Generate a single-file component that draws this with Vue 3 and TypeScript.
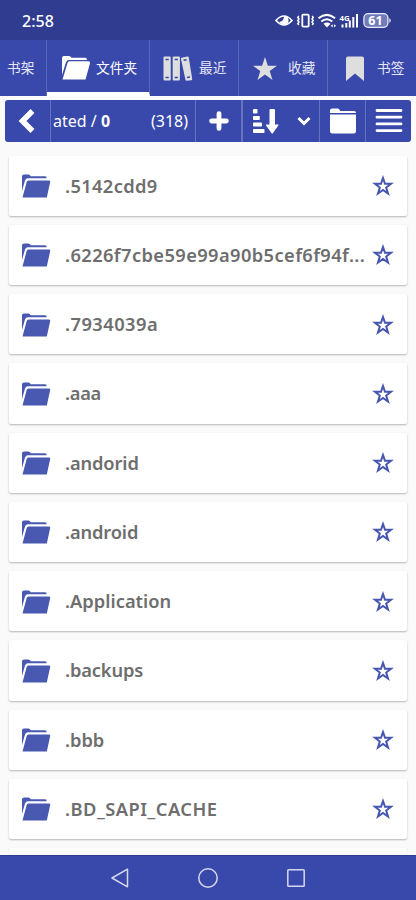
<script setup lang="ts">
interface Folder {
  name: string
  spacing: number
}

const folders: Folder[] = [
  { name: '.5142cdd9', spacing: 0.36 },
  { name: '.6226f7cbe59e99a90b5cef6f94f...', spacing: 0.4 },
  { name: '.7934039a', spacing: 0.46 },
  { name: '.aaa', spacing: -0.3 },
  { name: '.andorid', spacing: -0.12 },
  { name: '.android', spacing: -0.14 },
  { name: '.Application', spacing: 0.02 },
  { name: '.backups', spacing: -0.14 },
  { name: '.bbb', spacing: -0.05 },
  { name: '.BD_SAPI_CACHE', spacing: 0.5 },
]
</script>

<template>
  <div class="screen">
    <header class="status">
      <span class="clock">2:58</span>
      <svg class="indicators" width="120" height="20" viewBox="0 0 120 20" fill="none" stroke="#fff">
        <path d="M1 10.500Q9 1.500 17 10.500Q9 19.500 1 10.500Z" stroke-width="1.700" />
        <path d="M9 6a4.500 4.500 0 1 1-4.400 5.200C6 12 8.800 11 9 6Z" fill="#fff" stroke="none" />
        <rect x="27.300" y="4.600" width="6.400" height="12" rx="1" stroke-width="1.800" />
        <path d="M23.800 6l-1 1.500 1.200 1.500-1.200 1.500 1.200 1.500-1.200 1.500 1 1.500M37.200 6l1 1.500-1.200 1.500 1.200 1.500-1.200 1.500 1.200 1.500-1 1.500" stroke-width="1.500" />
        <path d="M43.500 8.200q8.300-6.600 16.600 0M46.300 11.500q5.500-4.600 11 0" stroke-width="2" />
        <path d="M48.500 13.800q3.500-2.600 7 0L52 17.400ZM55.700 15.800l2-1.600v3.200ZM61 15.800l-2-1.600v3.200Z" fill="#fff" stroke="none" />
        <path d="M67.500 14.500V17.500M71.300 13V17.500M74.800 10.500V17.500M78.300 7V17.500M82 4V17.500" stroke-width="2" />
        <text x="64.500" y="10.500" font-size="7.800" fill="#fff" stroke="none" font-weight="700">4G</text>
        <rect x="88.900" y="3.700" width="24" height="13.600" rx="4.200" fill="#737cba" stroke="#e8eaf5" stroke-width="1.300" />
        <path d="M114.400 8q2.600 2.500 0 5z" fill="#fff" stroke="none" />
        <text x="100.500" y="14.800" text-anchor="middle" font-size="12.500" fill="#fff" stroke="none" font-weight="700">61</text>
      </svg>
    </header>

    <nav class="tabs">
      <div class="tab shelf"><span>书架</span></div>
      <div class="tab folder active">
        <svg width="30" height="26" viewBox="0 0 30 26" fill="#fff">
          <path d="M1 2q0-2 2-2h5q1.500 0 2.500 1.800h13.700q1.800 0 1.800 2.200H8Q6 4 5 6.200L1 19Z" />
          <path d="M8.500 5.200H27.500q2 0 1.500 2L24.500 23.500H1.500L6.500 7q.5-1.800 2-1.800Z" />
        </svg>
        <span>文件夹</span>
      </div>
      <div class="tab recent">
        <svg width="30" height="26" viewBox="0 0 30 26">
          <g fill="#dedede">
            <rect x=".5" y=".5" width="7.200" height="24" rx="1" /><rect x="9.700" y=".5" width="7.200" height="24" rx="1" />
            <path d="M18.500 1.800 24.500 .500q1-.2 1.200.8L29.200 23q.1 1-.8 1.200l-4.700.6q-1 .1-1.200-.8L18 3q-.2-1 .5-1.200Z" />
          </g>
          <path d="M2.500 3.500h3.200M11.700 3.500h3.200M20.600 4.300l3-.6M2.500 21.500h3.200M11.700 21.500h3.200M24 21.500l3-.5" stroke="#3949ab" stroke-width="1.600" />
        </svg>
        <span>最近</span>
      </div>
      <div class="tab favorite">
        <svg width="26" height="26" viewBox="0 0 26 26" fill="#dedede"><path d="M13 1l2.900 8.700H25l-7.300 5.400L20.500 24 13 18.600 5.500 24l2.800-8.900L1 9.700h9.100Z" /></svg>
        <span>收藏</span>
      </div>
      <div class="tab bookmark">
        <svg width="20" height="26" viewBox="0 0 20 26" fill="#dedede"><path d="M1 2.500Q1 .500 3 .500h14q2 0 2 2V25l-9-7.500L1 25Z" /></svg>
        <span>书签</span>
      </div>
    </nav>

    <div class="toolbar">
      <div class="tool back">
        <svg width="18" height="26" viewBox="0 0 18 26" fill="none" stroke="#fff" stroke-width="5.500"><path d="M14.500 3 4.500 13 14.500 23" /></svg>
      </div>
      <div class="tool path">
        <span>ated / <b>0</b></span><span class="count">(318)</span>
      </div>
      <div class="tool add">
        <svg width="20" height="20" viewBox="0 0 20 20" stroke="#fff" stroke-width="4.800" stroke-linecap="round"><path d="M2.600 10h14.800M10 2.600v14.800" /></svg>
      </div>
      <div class="tool sort">
        <svg width="27" height="26" viewBox="0 0 27 26" fill="#fff">
          <rect x="1" y="1" width="4.500" height="4.500" rx=".8" /><rect x="1" y="8" width="6.800" height="4" rx=".8" /><rect x="1" y="14.500" width="9" height="4" rx=".8" /><rect x="1" y="21" width="11.500" height="4" rx=".8" />
          <path d="M17.500 2q0-1 1-1h3.500q1 0 1 1v14.500h3q1 0 .3 1l-5.500 7.800q-.6.700-1.200 0L14.100 17.500q-.6-1 .4-1h3Z" />
        </svg>
        <svg class="chevron" width="14" height="10" viewBox="0 0 14 10" fill="none" stroke="#fff" stroke-width="3"><path d="M1.500 2 7 7.500 12.500 2" /></svg>
      </div>
      <div class="tool directory">
        <svg width="28" height="26" viewBox="0 0 28 26" fill="#fff">
          <path d="M1 5V2.500Q1 .500 3 .500h6q1.200 0 2.200 2.500H25q2 0 2 2Z" /><path d="M1 6.500h26V23q0 2.500-2.500 2.500h-21Q1 25.500 1 23Z" />
        </svg>
      </div>
      <div class="tool menu">
        <svg width="28" height="26" viewBox="0 0 28 26" stroke="#fff" stroke-width="2.800" stroke-linecap="round"><path d="M2 2.500h24M2 9.200h24M2 15.900h24M2 22.600h24" /></svg>
      </div>
    </div>

    <main class="list">
      <article v-for="folder in folders" :key="folder.name" class="card">
        <svg class="folder-icon" width="30" height="24" viewBox="0 0 30 24" fill="#4959b2">
          <path d="M1 2.200Q1 .500 3 .500h4.500q1.500 0 2.200 1.800h14.500q1.500 0 1.500 2H7Q4.800 4.300 4 6.500L1 17Z" />
          <path d="M7.500 6.500H28q1.600 0 1.200 1.600L25.800 23.500H1.500L5.600 8.200Q6 6.500 7.500 6.500Z" />
        </svg>
        <span class="name" :style="{ letterSpacing: folder.spacing + 'px' }">{{ folder.name }}</span>
        <svg class="star" width="22" height="22" viewBox="0 0 22 22" fill="none" stroke="#4656b1" stroke-width="2"><path d="M11 3l2 5.800h6l-4.800 3.700 1.800 6-5-3.600-5 3.600 1.800-6L3 8.800h6Z" /></svg>
      </article>
      <article class="card peek"></article>
    </main>

    <footer class="system">
      <svg width="20" height="22" viewBox="0 0 20 22"><path d="M17.500 2.200v17.600L2 11Z" /></svg>
      <svg width="22" height="22" viewBox="0 0 22 22"><circle cx="11" cy="11" r="9.200" /></svg>
      <svg width="20" height="22" viewBox="0 0 20 22"><rect x="1.800" y="2.800" width="16.400" height="16.400" rx=".8" /></svg>
    </footer>
  </div>
</template>

<style>
body { margin: 0; }
</style>

<style scoped>
.screen {
  display: flex;
  flex-direction: column;
  width: 416px;
  height: 900px;
  overflow: hidden;
  background: #fafafa;
  color: #fff;
  font-family: "Noto Sans", "Noto Sans CJK SC", sans-serif;
}
.screen *, .screen { box-sizing: border-box; }
svg { display: block; flex: none; }
.status {
  flex: none;
  display: flex;
  align-items: center;
  justify-content: space-between;
  height: 40px;
  padding: 0 21px 0 22px;
  background: #2f3c8f;
}
.clock { font-size: 16px; font-weight: 500; line-height: 40px; padding-top: 1px; }
.tabs {
  flex: none;
  display: grid;
  grid-template-columns: 46.5px 103px 89px 89px 88.5px;
  height: 56px;
  background: #3949ab;
}
.tab {
  display: flex;
  align-items: center;
  border-right: 1px solid #5c69ba;
  font-size: 13.7px;
  line-height: 20px;
  white-space: nowrap;
  color: #e5e7f4;
}
.tab:last-child { border-right: 0; }
.tab svg { position: relative; top: 1px; }
.shelf { padding-left: 7px; }
.folder { padding: 4px 0 0 14.5px; gap: 5px; color: #fff; border-bottom: 4px solid #fff; }
.recent { padding-left: 13.5px; gap: 6px; }
.favorite { padding-left: 13.5px; gap: 10px; }
.bookmark { padding-left: 17.5px; gap: 12px; }
.toolbar {
  flex: none;
  display: grid;
  grid-template-columns: 46px 145px 47px 77px 46px 45px;
  width: 406px;
  height: 42px;
  margin: 4px 0 0 5px;
  border-radius: 3px;
  background: #3949ab;
}
.tool { display: flex; align-items: center; justify-content: center; border-right: 1px solid #6773bf; }
.tool:last-child { border-right: 0; }
.back { padding-right: 2px; }
.add { border-right-width: 2px; }
.path { justify-content: space-between; padding: 0 7px 0 2px; font-size: 16px; white-space: nowrap; }
.sort { justify-content: flex-start; padding-left: 9px; gap: 18px; }
.list { flex: 1; min-height: 0; overflow: hidden; margin-bottom: 4px; padding: 13.5px 9px 0; }
.card {
  display: flex;
  align-items: center;
  height: 60.25px;
  margin-bottom: 9px;
  padding: 0 13px 0 12px;
  border-radius: 2px;
  background: #fff;
  box-shadow: 0 1px 2px rgba(0, 0, 0, .28);
}
.folder-icon { margin-top: 1px; }
.star { margin-top: 1px; }
.name {
  flex: 1;
  min-width: 0;
  margin-left: 14px;
  font-size: 18.3px;
  font-weight: 600;
  line-height: 26px;
  white-space: nowrap;
  color: #6e6e6e;
}
.peek { height: 30px; }
.system {
  flex: none;
  display: grid;
  grid-template-columns: repeat(3, 88px);
  justify-content: center;
  justify-items: center;
  align-items: center;
  height: 45px;
  background: #3949ab;
  border-top: 1px solid #2f3d91;
}
.system svg { fill: none; stroke: #d5d9ef; stroke-width: 1.5; stroke-linejoin: round; }
</style>
